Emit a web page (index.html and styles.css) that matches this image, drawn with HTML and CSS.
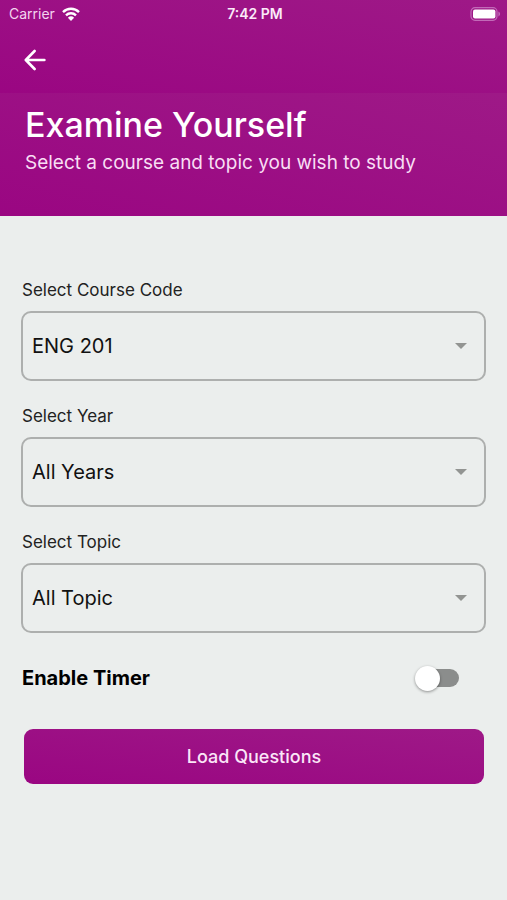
FILE: index.html
```
<!DOCTYPE html>
<html lang="en">
<head>
<meta charset="utf-8">
<meta name="viewport" content="width=device-width, initial-scale=1">
<title>Examine Yourself</title>
<link rel="stylesheet" href="styles.css">
</head>
<body>
<header>
  <div class="topbar">
    <div class="status">
      <div class="carrier">
        <span>Carrier</span>
        <svg width="18" height="14" viewBox="0 0 18 14" fill="none" stroke="#fff" stroke-width="2.4" aria-hidden="true">
          <path d="M1 5.1a11.4 11.4 0 0 1 16 0"/>
          <path d="M4 8.3a7.2 7.2 0 0 1 10 0"/>
          <path d="M9 14 5.9 10.8a4.5 4.5 0 0 1 6.2 0z" fill="#fff" stroke="none"/>
        </svg>
      </div>
      <time>7:42 PM</time>
      <svg class="battery" width="31" height="14" viewBox="0 0 31 14" aria-hidden="true">
        <rect x="1" y="0.7" width="26" height="12.6" rx="4" fill="none" stroke="#c26ab8" stroke-width="1.2"/>
        <rect x="3" y="2.4" width="22.4" height="9.2" rx="2" fill="#fff"/>
        <path d="M28.4 4.6c2.2.8 2.2 4 0 4.8z" fill="#c26ab8"/>
      </svg>
    </div>
    <button class="back" type="button" aria-label="Back">
      <svg width="22" height="22" viewBox="0 0 22 22" fill="none" stroke="#fff" stroke-width="2.6" stroke-linecap="round" stroke-linejoin="round" aria-hidden="true">
        <path d="M20.4 11H2M10.6 2 1.8 11l8.8 9"/>
      </svg>
    </button>
  </div>
  <div class="hero">
    <h1>Examine Yourself</h1>
    <p>Select a course and topic you wish to study</p>
  </div>
</header>
<main>
  <form>
    <div class="field">
      <label for="course">Select Course Code</label>
      <div class="picker">
        <select id="course"><option>ENG 201</option></select>
        <svg width="12" height="6" viewBox="0 0 12 6" aria-hidden="true"><path d="M0 0h12L6 6z" fill="#929492"/></svg>
      </div>
    </div>
    <div class="field">
      <label for="year">Select Year</label>
      <div class="picker">
        <select id="year"><option>All Years</option></select>
        <svg width="12" height="6" viewBox="0 0 12 6" aria-hidden="true"><path d="M0 0h12L6 6z" fill="#929492"/></svg>
      </div>
    </div>
    <div class="field">
      <label for="topic">Select Topic</label>
      <div class="picker">
        <select id="topic"><option>All Topic</option></select>
        <svg width="12" height="6" viewBox="0 0 12 6" aria-hidden="true"><path d="M0 0h12L6 6z" fill="#929492"/></svg>
      </div>
    </div>
    <div class="timer">
      <label for="timer">Enable Timer</label>
      <input id="timer" class="switch" type="checkbox" role="switch">
    </div>
    <button class="load" type="button">Load Questions</button>
  </form>
</main>
</body>
</html>
```

FILE: styles.css
```
* {
  box-sizing: border-box;
}

body {
  margin: 0;
  min-height: 100vh;
  background: #ebeeed;
  color: #111;
  font-family: Inter, "Liberation Sans", sans-serif;
}

.topbar,
.hero,
.load {
  background: linear-gradient(to top right, #9a0682, #9e1987);
}

.topbar {
  height: 93px;
}

.status {
  display: grid;
  grid-template-columns: 1fr auto 1fr;
  align-items: center;
  height: 27px;
  padding: 0 6px 0 9px;
  color: #fff;
  font-size: 14px;
}

.carrier {
  display: flex;
  align-items: center;
  gap: 7px;
  color: #f3d5ef;
}

.status time {
  font-weight: 600;
  color: #fbeaf9;
}

.battery {
  justify-self: end;
}

.back {
  display: flex;
  margin: 22px 0 0 16px;
  padding: 0 8px;
  border: 0;
  background: none;
}

.back svg {
  display: block;
}

.hero {
  padding: 10px 25px 41px;
  color: #fff;
}

h1 {
  margin: 0;
  font-size: 34px;
  font-weight: 500;
  line-height: 44px;
}

.hero p {
  margin: 3px 0 0;
  color: #f8def4;
  font-size: 19px;
  line-height: 25px;
}

form {
  display: flex;
  flex-direction: column;
  gap: 22px;
  padding: 61px 21px 24px;
}

.field label {
  display: block;
  padding-left: 1px;
  margin-bottom: 8px;
  font-size: 17px;
  line-height: 26px;
  color: #222;
}

.picker {
  display: grid;
  align-items: center;
}

.picker select,
.picker svg {
  grid-area: 1 / 1;
}

.picker svg {
  justify-self: end;
  margin-right: 19px;
  pointer-events: none;
}

select {
  appearance: none;
  width: 100%;
  height: 70px;
  padding: 0 40px 0 9px;
  border: 2px solid #adafae;
  border-radius: 10px;
  background: transparent;
  color: #111;
  font: 400 20px/24px Inter, "Liberation Sans", sans-serif;
}

.timer {
  display: flex;
  align-items: center;
  justify-content: space-between;
  height: 46px;
  padding: 0 27px 0 1px;
  font-size: 20px;
  font-weight: 700;
  color: #000;
}

.switch {
  appearance: none;
  display: flex;
  align-items: center;
  width: 42px;
  height: 18px;
  margin: 0;
  border-radius: 9px;
  background: #8b8d8c;
}

.switch::before {
  content: "";
  flex: none;
  width: 25px;
  height: 25px;
  margin-left: -2px;
  border-radius: 50%;
  background: #fff;
  box-shadow: 0 1px 3px rgb(0 0 0 / 40%);
}

.switch:checked {
  justify-content: flex-end;
  background: #9a0682;
}

.load {
  height: 55px;
  margin: 6px 2px 0 3px;
  border: 0;
  border-radius: 9px;
  color: #fbe6f8;
  font: 500 18px/24px Inter, "Liberation Sans", sans-serif;
}
```
